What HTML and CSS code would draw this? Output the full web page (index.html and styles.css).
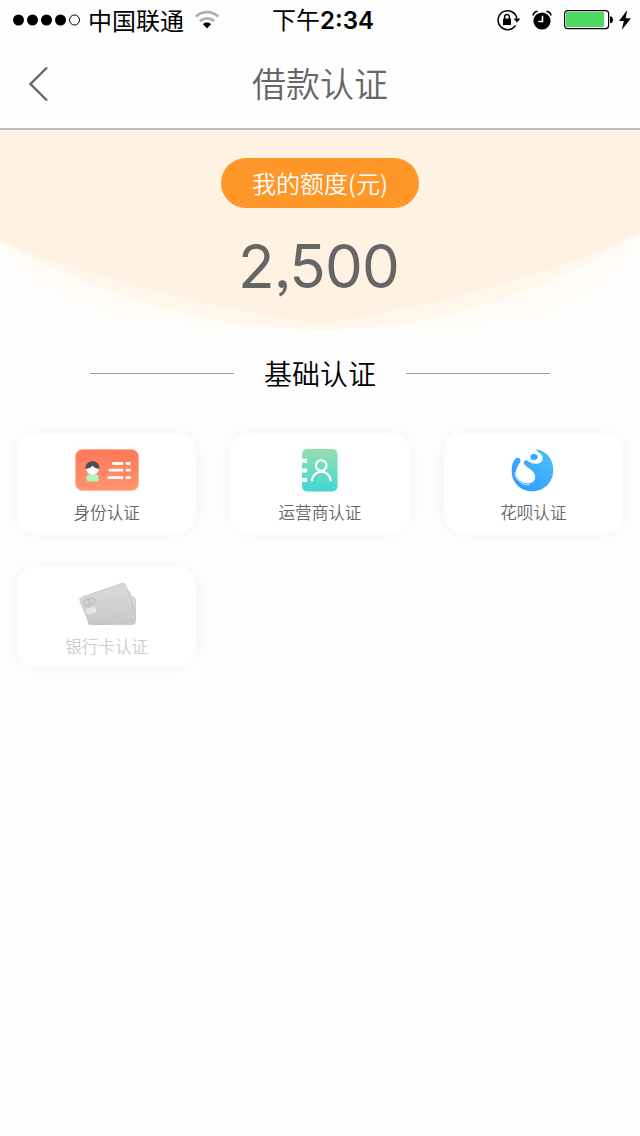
FILE: index.html
```html
<!DOCTYPE html>
<html lang="zh-CN">

<head>
  <meta charset="UTF-8" />
  <meta name="viewport" content="width=device-width, initial-scale=1.0" />
  <title>借款认证</title>
  <link rel="stylesheet" href="styles.css">
</head>

<body>

  <!-- 状态栏 -->
  <div class="status-bar">
    <div class="status-left">
      <svg class="signal" width="68" height="12" viewBox="0 0 68 12">
        <circle cx="5.5" cy="6" r="5.5" />
        <circle cx="19.5" cy="6" r="5.5" />
        <circle cx="33.5" cy="6" r="5.5" />
        <circle cx="47.5" cy="6" r="5.5" />
        <circle cx="61.5" cy="6" r="5" fill="none" stroke="#000" />
      </svg>
      <span class="carrier">中国联通</span>
      <svg class="wifi" width="26" height="20" viewBox="0 0 26 20" fill="none">
        <path d="M1.8 6.6C8 .6 18 .6 24.2 6.6" stroke="#b0b0b0" stroke-width="2.8" />
        <path d="M6 11.2c4-3.8 10-3.8 14 0" stroke="#b0b0b0" stroke-width="2.8" />
        <path d="M13 18.500l-4.200-4.400c2.300-2.200 6.100-2.200 8.400 0z" fill="#000" />
      </svg>
    </div>
    <div class="status-time">下午<b>2:34</b></div>
    <div class="status-right">
      <svg width="24" height="22" viewBox="0 0 24 22">
        <path d="M18.500 16.400A9.500 9.500 0 1 1 19.900 9.500" fill="none" stroke="#000" stroke-width="1.500" />
        <path d="M16.500 9.500h7l-3.500 4z" />
        <rect x="6" y="9.500" width="8" height="6.500" rx=".6" />
        <path d="M7.600 10V7.900a2.400 2.400 0 0 1 4.800 0V10" fill="none" stroke="#000" stroke-width="1.400" />
      </svg>
      <svg class="alarm" width="20" height="20" viewBox="0 0 20 20">
        <circle cx="10" cy="11" r="8.600" />
        <path d="M1 5.500Q1.600 2 5.600 1.300M19 5.500Q18.400 2 14.400 1.300" fill="none" stroke="#000" stroke-width="1.600" />
        <path d="M10.500 5.800v5.700H6.300" fill="none" stroke="#fff" stroke-width="1.500" />
      </svg>
      <svg class="battery" width="50" height="20" viewBox="0 0 50 20">
        <rect x=".6" y=".6" width="44" height="18" rx="3" fill="#fff" stroke="#000" stroke-width="1.200" />
        <rect x="2" y="2" width="38" height="15" rx="1" fill="#4cd964" />
        <path d="M46 6.200c4 0 4 7 0 7z" />
      </svg>
      <svg class="bolt" width="12" height="20" viewBox="0 0 12 20">
        <path d="M8.200 0L0 11h4.800L2.800 20 12 8.200H6.600z" />
      </svg>
    </div>
  </div>

  <!-- 导航栏 -->
  <div class="nav-bar">
    <svg class="back" width="22" height="36" viewBox="0 0 22 36">
      <path d="M20 1.500L3.500 18 20 34.500" fill="none" stroke="#666" stroke-width="2.400" />
    </svg>
    <h1>借款认证</h1>
  </div>

  <!-- 我的额度 -->
  <div class="quota">
    <svg class="wave" width="640" height="202" viewBox="0 130 640 202">
      <path fill="#fffcf7" d="M0 130H640V233C615 300 535 330 430 330H240C120 326 40 305 0 241z" />
      <path fill="#fff7ec" d="M0 130H640V233C520 308 415 329 320 329C225 329 110 304 0 241z" />
      <path fill="#fff2e2" d="M0 130H640V233C540 278 440 305 320 324C200 306 100 280 0 241z" />
    </svg>
    <div class="quota-label">我的额度(元)</div>
    <div class="quota-num">2,500</div>
  </div>

  <div class="section-title"><span>基础认证</span></div>

  <div class="card-list">
    <div class="card">
      <svg width="66" height="44" viewBox="0 0 66 44">
        <defs>
          <linearGradient id="idBg" x1="0" y1="0" x2="0" y2="1">
            <stop offset="0" stop-color="#ff7757" />
            <stop offset="1" stop-color="#ff946f" />
          </linearGradient>
        </defs>
        <rect x="1.500" y="1.500" width="63" height="41" rx="7" fill="url(#idBg)" stroke="#ffad97" stroke-width=".6" />
        <rect x="12.500" y="26.500" width="12" height="7" rx="2.500" fill="#a8f9bd" />
        <circle cx="18.500" cy="20.500" r="6.400" fill="#fff" />
        <path d="M11.500 21C11 10.500 26 10.500 25.500 21C22 20.500 19.500 19.500 18.500 17.500C17.500 19.500 15 20.500 11.500 21z" fill="#4d4d4d" />
        <path d="M39.500 15.500h8.500M35.800 22.200h12.200M34.800 29.700h13.200M53 15.500h2.500M53 22.200h2.500M53 29.700h2.500" stroke="#fff" stroke-width="2.800" stroke-linecap="round" />
      </svg>
      <p>身份认证</p>
    </div>
    <div class="card">
      <svg width="66" height="44" viewBox="0 0 66 44">
        <defs>
          <linearGradient id="bookBg" x1="0" y1="0" x2="0" y2="1">
            <stop offset="0" stop-color="#96dfae" />
            <stop offset="1" stop-color="#42d6d3" />
          </linearGradient>
        </defs>
        <rect x="15" y="1" width="35.500" height="42.500" rx="5" fill="url(#bookBg)" />
        <path d="M14 12.700h6M14 22.400h6M14 32h6" stroke="#fff" stroke-width="4" />
        <circle cx="34.200" cy="17.500" r="5.300" fill="none" stroke="#fff" stroke-width="2.100" />
        <path d="M24.700 32.500C26.500 20.800 42 20.800 43.800 32.500" fill="none" stroke="#fff" stroke-width="2.100" stroke-linecap="round" />
      </svg>
      <p>运营商认证</p>
    </div>
    <div class="card">
      <svg width="66" height="44" viewBox="0 0 66 44">
        <defs>
          <linearGradient id="huaBg" x1="1" y1="0" x2="0" y2="1">
            <stop offset="0" stop-color="#4cc4fb" />
            <stop offset="1" stop-color="#2b94ff" />
          </linearGradient>
        </defs>
        <path d="M35.500 1.200C46 2 53.300 11 53.300 22C53.300 34 44 43.300 32.500 43.300C20.500 43.300 11.700 34.500 11.700 23C11.700 16.500 13.500 12 16 10.200C19 8.500 21.500 11 20 14.500C17.500 19 15 22 16 27C17.500 32.500 22.500 35.500 28 35.500C33.500 35.300 36 31.500 35 27.500C34 22.500 28.500 20.500 25 17C22.800 14.500 24.300 11.500 27 12.300C29.500 14.500 32.500 16 36.500 15.800C41.500 15.200 43.500 12 42.300 8.500C41.300 5.500 38 4.500 35.500 1.200z" fill="url(#huaBg)" />
        <path d="M14.800 24C15.500 32 21.500 37.500 29.500 36.800" fill="none" stroke="#fff" stroke-width=".8" />
        <ellipse cx="34" cy="9" rx="3.700" ry="2.900" fill="#36a7fe" />
      </svg>
      <p>花呗认证</p>
    </div>
    <div class="card disabled">
      <svg width="66" height="44" viewBox="0 0 66 44">
        <defs>
          <linearGradient id="bankBg" x1="0" y1="0" x2="0" y2="1">
            <stop offset="0" stop-color="#dadada" />
            <stop offset="1" stop-color="#c9c9c9" />
          </linearGradient>
        </defs>
        <g fill="url(#bankBg)" stroke="#c3c3c3" stroke-width=".8" stroke-linejoin="round">
          <path d="M15 42.500V21q0-3 3-3l40-3.500q3 .5 3.500 3.500V39.500q0 3-3 3z" />
          <path d="M15 42.500L10 20L52 8.500q3-.6 4 2.300L61 34q.5 3-2.500 3.700L35 42.500z" />
          <path d="M6.200 19.500q-1.500-3 1.500-4.200L47.500 1.500q3-1 4.200 1.800L60 26q.8 2.500-1.800 3.500L21 42.300h-3q-2.500 0-3.500-2.800z" />
        </g>
        <g fill="none" stroke="#b3b3b3" stroke-width=".8">
          <circle cx="13.500" cy="20.700" r="3.500" />
          <circle cx="17.500" cy="19.500" r="3.500" />
        </g>
        <path d="M12 27l8-2.300q1-.2 1.200.8l1.100 3.700q.2 1-.7 1.200l-7.300 2.200q-1 .2-1.300-.7L11.500 28q-.2-.8.5-1z" fill="#e6e6e6" />
      </svg>
      <p>银行卡认证</p>
    </div>
  </div>

</body>

</html>
```
FILE: styles.css
```css
* {
  box-sizing: border-box;
}
body {
  min-height: 100vh;
  margin: 0;
  background-color: #fefefe;
  font-family: Inter, "Noto Sans CJK SC", sans-serif;
  color: #666;
}
svg {
  display: block;
}
.status-bar {
  display: grid;
  grid-template-columns: 1fr auto 1fr;
  align-items: center;
  height: 40px;
  padding: 0 9px 0 13px;
  color: #000;
  font-size: 24px;
  line-height: 36px;
}
.status-left, .status-right {
  display: flex;
  align-items: center;
}
.carrier {
  margin: 3px 9px 0 7px;
}
.wifi {
  margin-left: 1px;
}
.status-time {
  display: flex;
  margin: 2px 0 0 2px;
}
.status-time b {
  font-weight: 600;
}
.status-right {
  justify-content: flex-end;
}
.alarm {
  margin-left: 11px;
}
.battery {
  margin-left: 12px;
}
.bolt {
  margin-left: 5px;
}
.nav-bar {
  display: grid;
  grid-template-columns: 22px 1fr 22px;
  align-items: center;
  height: 90px;
  padding: 0 27px;
  border-bottom: 2px solid #bfbfbf;
}
.nav-bar h1 {
  margin: 0;
  padding-top: 2px;
  text-align: center;
  font-size: 34px;
  font-weight: 350;
  line-height: 48px;
}
.quota {
  position: relative;
  height: 202px;
  padding-top: 28px;
  text-align: center;
}
/* 三层弧形背景 */
.wave {
  position: absolute;
  top: 0;
  left: 0;
}
.quota-label {
  position: relative;
  width: 198px;
  height: 50px;
  margin: 0 auto;
  border-radius: 25px;
  background-color: #ff9628;
  color: #fff;
  font-family: "Noto Sans CJK SC", sans-serif;
  font-size: 24px;
  font-weight: 350;
  line-height: 50px;
}
.quota-num {
  position: relative;
  margin-top: 23px;
  padding-right: 3px;
  font-size: 60px;
  line-height: 70px;
  letter-spacing: -0.8px;
  font-feature-settings: "ss03";
}
.section-title {
  display: flex;
  align-items: center;
  gap: 30px;
  height: 42px;
  margin-top: 20px;
  padding: 0 90px;
  color: #000;
  font-size: 28px;
  font-weight: 350;
}
.section-title::before, .section-title::after {
  content: "";
  flex: 1;
  height: 1px;
  background-color: #999;
}
.card-list {
  display: grid;
  grid-template-columns: repeat(3, 1fr);
  gap: 34px;
  padding: 0 17px 34px;
  margin-top: 39px;
}
.card {
  display: flex;
  flex-direction: column;
  align-items: center;
  height: 100px;
  padding-top: 15px;
  border-radius: 18px;
  background-color: #fff;
  box-shadow: 0 0 20px rgba(0, 0, 0, 0.05);
}
.card p {
  margin: 9px 0 0;
  font-size: 16.6px;
  font-weight: 350;
  line-height: 24px;
}
.disabled p {
  color: #ccc;
}
```
